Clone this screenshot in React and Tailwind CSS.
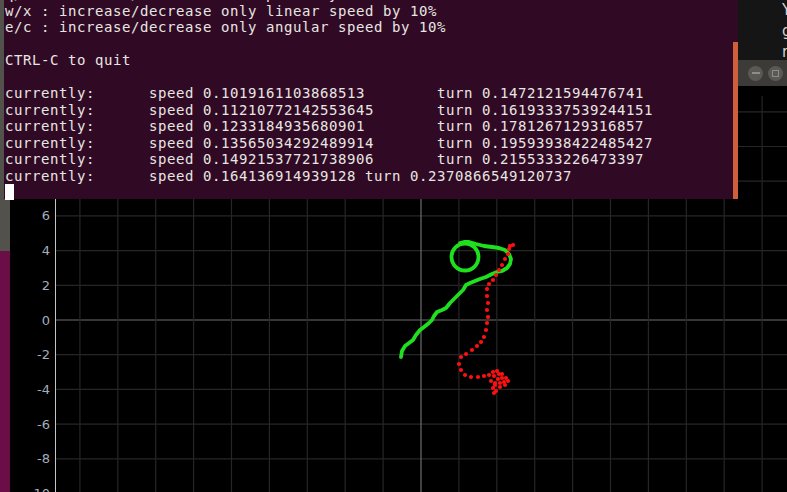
import React from 'react';

// terminal output of teleop_twist_keyboard
const termLines = [
  'q/z : increase/decrease max speeds by 10%',
  'w/x : increase/decrease only linear speed by 10%',
  'e/c : increase/decrease only angular speed by 10%',
  '',
  'CTRL-C to quit',
  '',
  'currently:      speed 0.1019161103868513        turn 0.1472121594476741',
  'currently:      speed 0.11210772142553645       turn 0.16193337539244151',
  'currently:      speed 0.1233184935680901        turn 0.1781267129316857',
  'currently:      speed 0.13565034292489914       turn 0.19593938422485427',
  'currently:      speed 0.14921537721738906       turn 0.2155333226473397',
  'currently:      speed 0.164136914939128 turn 0.2370866549120737',
];

const greenPts = [
  [401, 357], [402, 351], [405, 346], [409, 343], [413, 340], [416, 335], [420, 330],
  [424, 327], [429, 323], [432, 320], [434, 316], [437, 312], [442, 310], [446, 308],
  [450, 303], [455, 298], [459, 294], [463, 290], [466, 285], [470, 283], [475, 281],
  [480, 279], [486, 277], [492, 274], [497, 272], [502, 271], [507, 268], [510, 264],
  [511, 259], [509, 254], [505, 250], [499, 248], [492, 247], [484, 246], [476, 244],
  [469, 242], [464, 242], [460, 243],
];

const redPts = [
  [513, 245], [510, 246], [509, 249], [508, 254], [505, 259], [502, 265], [499, 270],
  [496, 275], [493, 280], [489, 284], [487, 289], [487, 296], [488, 303], [487, 310],
  [488, 317], [487, 323], [486, 330], [484, 337], [481, 342], [477, 346], [472, 350],
  [466, 354], [461, 357], [459, 364], [461, 370], [465, 375], [471, 377], [478, 377],
  [484, 376], [489, 375], [493, 372], [497, 371], [502, 374], [506, 378], [508, 381],
  [505, 385], [500, 387], [496, 391], [494, 393], [493, 388], [495, 383], [498, 379],
  [502, 378], [500, 383], [495, 385], [491, 381], [494, 376], [499, 374], [504, 382],
];

const yTicks = [-10, -8, -6, -4, -2, 0, 2, 4, 6, 8, 10, 12];
const xLines = Array.from({ length: 19 }, (_, i) => 421 + (i - 9) * 37.9);

const toY = (v) => 320 - v * 17.35;

const Plot = () => (
  <svg className="block w-full h-full" viewBox="10 86 777 406">
    <rect x="10" y="86" width="777" height="406" fill="#000" />
    {yTicks.map((v) => (
      <g key={v}>
        <line
          x1="55"
          x2="787"
          y1={toY(v)}
          y2={toY(v)}
          stroke={v === 0 ? '#6e6e6e' : '#262626'}
          strokeWidth="1.2"
        />
        <text
          x="50"
          y={toY(v) + 4.5}
          textAnchor="end"
          fontSize="13"
          fontFamily="DejaVu Sans, sans-serif"
          fill="#a4aeb9"
        >
          {v}
        </text>
      </g>
    ))}
    {xLines.map((x, i) => (
      <line
        key={i}
        x1={x}
        x2={x}
        y1="96"
        y2="492"
        stroke={i === 9 ? '#6e6e6e' : '#262626'}
        strokeWidth="1.2"
      />
    ))}
    <line x1="55.5" x2="55.5" y1="96" y2="492" stroke="#c4c4c4" strokeWidth="1" />

    <polyline
      points={greenPts.map((p) => p.join(',')).join(' ')}
      fill="none"
      stroke="#1fe01f"
      strokeWidth="3.8"
      strokeLinecap="round"
      strokeLinejoin="round"
    />
    <circle cx="465" cy="257" r="13.5" fill="none" stroke="#1fe01f" strokeWidth="3.8" />
    {redPts.map(([x, y], i) => (
      <circle key={i} cx={x} cy={y} r="2.1" fill="#ff1010" />
    ))}
  </svg>
);

export default function App() {
  return (
    <div className="relative w-[787px] h-[492px] overflow-hidden bg-[#6b0d46]">
      {/* launcher edge */}
      <div className="absolute left-0 top-0 w-[10px] h-[251px] bg-[#52514c]" />

      {/* dark window peeking at top right */}
      <div className="absolute left-[738px] top-0 w-[60px] h-[60px] bg-[#151515] pl-[44px] text-[15px] leading-[21px] text-[#d2d2d2] font-['DejaVu_Sans',sans-serif]">
        <div>Y</div>
        <div>g</div>
        <div>r</div>
      </div>

      {/* plot window */}
      <div className="absolute left-[10px] top-[60px] w-[777px] h-[432px] flex flex-col">
        <div className="h-[26px] bg-[#3c3b37] flex items-center justify-end gap-[5px] pr-[4px]">
          <div className="w-[15px] h-[15px] rounded-full bg-[#5a5954] flex items-center justify-center">
            <div className="w-[8px] h-[1.5px] bg-[#8e8d88]" />
          </div>
          <div className="w-[15px] h-[15px] rounded-full bg-[#5a5954] flex items-center justify-center">
            <div className="w-[7px] h-[7px] border border-[#8e8d88]" />
          </div>
        </div>
        <div className="flex-1 bg-black">
          <Plot />
        </div>
      </div>

      {/* terminal */}
      <div className="absolute left-[4px] top-[-14px] w-[734px] h-[213px] bg-[#300a24] flex">
        <div className="flex-1 pl-[1px] font-['DejaVu_Sans_Mono',monospace] text-[14px] leading-[16.5px] tracking-[0.57px] text-[#e8e6e2] whitespace-pre">
          {termLines.map((l, i) => (
            <div key={i} className="h-[16.5px]">{l}</div>
          ))}
          <div className="h-[16.5px] flex items-center">
            <div className="w-[9px] h-[16px] bg-white" />
          </div>
        </div>
        <div className="w-[5px] mt-[56px] bg-[#cf5f3b]" />
      </div>
    </div>
  );
}
